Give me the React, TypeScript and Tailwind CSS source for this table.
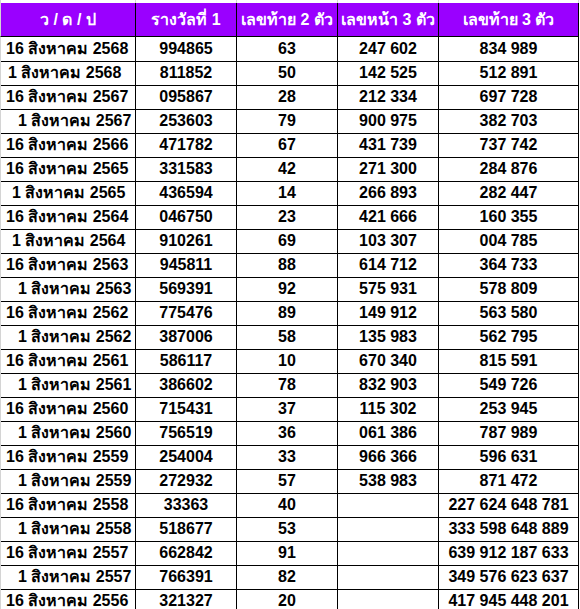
import React from 'react';

type Row = {
  date: string;
  indent: number;
  first: string;
  last2: string;
  front3: string;
  last3: string;
};

const rows: Row[] = [
  { date: '16 สิงหาคม 2568', indent: 6, first: '994865', last2: '63', front3: '247 602', last3: '834 989' },
  { date: '1 สิงหาคม 2568', indent: 8, first: '811852', last2: '50', front3: '142 525', last3: '512 891' },
  { date: '16 สิงหาคม 2567', indent: 6, first: '095867', last2: '28', front3: '212 334', last3: '697 728' },
  { date: '1 สิงหาคม 2567', indent: 18, first: '253603', last2: '79', front3: '900 975', last3: '382 703' },
  { date: '16 สิงหาคม 2566', indent: 6, first: '471782', last2: '67', front3: '431 739', last3: '737 742' },
  { date: '16 สิงหาคม 2565', indent: 6, first: '331583', last2: '42', front3: '271 300', last3: '284 876' },
  { date: '1 สิงหาคม 2565', indent: 12, first: '436594', last2: '14', front3: '266 893', last3: '282 447' },
  { date: '16 สิงหาคม 2564', indent: 6, first: '046750', last2: '23', front3: '421 666', last3: '160 355' },
  { date: '1 สิงหาคม 2564', indent: 12, first: '910261', last2: '69', front3: '103 307', last3: '004 785' },
  { date: '16 สิงหาคม 2563', indent: 6, first: '945811', last2: '88', front3: '614 712', last3: '364 733' },
  { date: '1 สิงหาคม 2563', indent: 18, first: '569391', last2: '92', front3: '575 931', last3: '578 809' },
  { date: '16 สิงหาคม 2562', indent: 6, first: '775476', last2: '89', front3: '149 912', last3: '563 580' },
  { date: '1 สิงหาคม 2562', indent: 18, first: '387006', last2: '58', front3: '135 983', last3: '562 795' },
  { date: '16 สิงหาคม 2561', indent: 6, first: '586117', last2: '10', front3: '670 340', last3: '815 591' },
  { date: '1 สิงหาคม 2561', indent: 18, first: '386602', last2: '78', front3: '832 903', last3: '549 726' },
  { date: '16 สิงหาคม 2560', indent: 6, first: '715431', last2: '37', front3: '115 302', last3: '253 945' },
  { date: '1 สิงหาคม 2560', indent: 18, first: '756519', last2: '36', front3: '061 386', last3: '787 989' },
  { date: '16 สิงหาคม 2559', indent: 6, first: '254004', last2: '33', front3: '966 366', last3: '596 631' },
  { date: '1 สิงหาคม 2559', indent: 18, first: '272932', last2: '57', front3: '538 983', last3: '871 472' },
  { date: '16 สิงหาคม 2558', indent: 6, first: '33363', last2: '40', front3: '', last3: '227 624 648 781' },
  { date: '1 สิงหาคม 2558', indent: 18, first: '518677', last2: '53', front3: '', last3: '333 598 648 889' },
  { date: '16 สิงหาคม 2557', indent: 6, first: '662842', last2: '91', front3: '', last3: '639 912 187 633' },
  { date: '1 สิงหาคม 2557', indent: 18, first: '766391', last2: '82', front3: '', last3: '349 576 623 637' },
  { date: '16 สิงหาคม 2556', indent: 6, first: '321327', last2: '20', front3: '', last3: '417 945 448 201' },
];

const cols = 'grid grid-cols-[136px_101px_101px_101px_140px]';
const cell = 'border-r border-b border-black flex items-center justify-center whitespace-nowrap';

export default function App() {
  return (
    <div className="w-[580px] h-[609px] overflow-hidden bg-white font-['Liberation_Sans',Tahoma,sans-serif] font-bold">
      {/* gridline strip above the header */}
      <div className={`${cols} h-[3px]`}>
        <div className="border-l border-r border-[#d4d4d4]" />
        <div className="border-r border-[#d4d4d4]" />
        <div className="border-r border-[#d4d4d4]" />
        <div className="border-r border-[#d4d4d4]" />
        <div className="border-r border-[#d4d4d4]" />
      </div>

      <div className={`${cols} h-[34px] text-white text-[16px]`}>
        <div className={`${cell} bg-[#9a00ff] border-l border-l-[#d4d4d4]`}>ว / ด / ป</div>
        <div className={`${cell} bg-[#9a00ff]`}>รางวัลที่ 1</div>
        <div className={`${cell} bg-[#9a00ff]`}>เลขท้าย 2 ตัว</div>
        <div className={`${cell} bg-[#9a00ff]`}>เลขหน้า 3 ตัว</div>
        <div className={`${cell} bg-[#9a00ff]`}>เลขท้าย 3 ตัว</div>
      </div>

      {rows.map((r, i) => (
        <div key={i} className={`${cols} h-[24px] text-black text-[16px]`}>
          <div className={`${cell} !justify-start border-l border-l-[#d4d4d4]`} style={{ paddingLeft: r.indent - 1 }}>
            {r.date}
          </div>
          <div className={cell}>{r.first}</div>
          <div className={cell}>{r.last2}</div>
          <div className={cell}>{r.front3}</div>
          <div className={cell}>{r.last3}</div>
        </div>
      ))}
    </div>
  );
}
